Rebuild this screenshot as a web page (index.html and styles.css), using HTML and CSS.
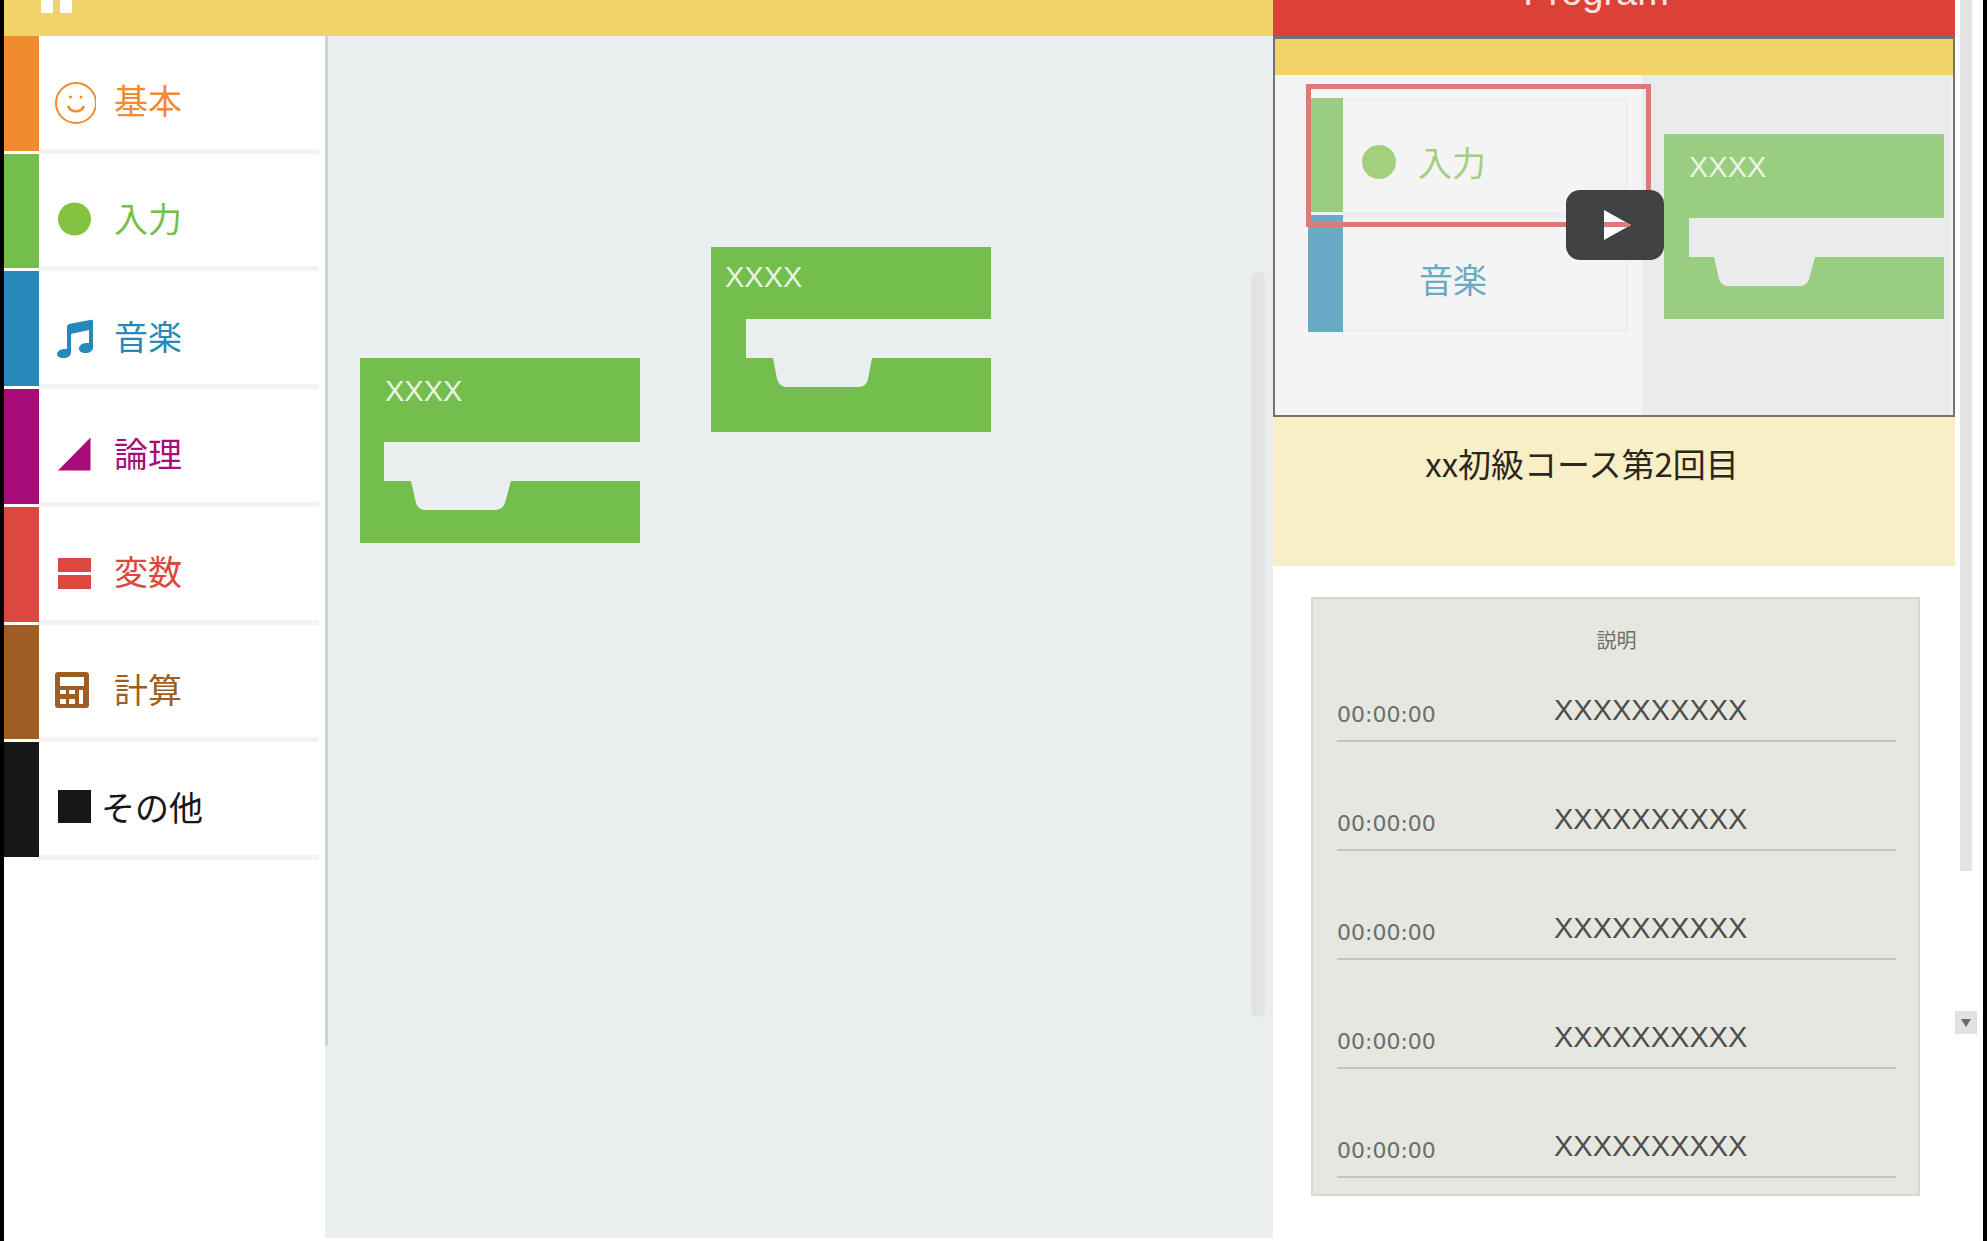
FILE: index.html
```html
<!DOCTYPE html>
<html lang="ja">
<head>
<meta charset="utf-8">
<title>Program</title>
<link rel="stylesheet" href="styles.css">
</head>
<body>
<div class="app">
  <div class="editor">
    <header class="toolbar">
      <button class="pause" type="button" aria-label="一時停止">
        <svg width="31" height="13" viewBox="0 0 31 13" fill="#fff"><path d="M0 0h12v13H0zM19 0h12v13H19z"/></svg>
      </button>
    </header>
    <div class="workspace">
      <nav class="sidebar">
        <ul class="menu">
          <li class="item basic"><span class="strip"></span><button type="button">
            <svg width="42" height="48" viewBox="0 0 42 48" fill="none" stroke="currentColor" stroke-width="2"><circle cx="22" cy="27" r="20"/><path d="M14 30c3 7 13 7 16 0" stroke-width="2.5"/><circle cx="16.500" cy="21" r="1.500" fill="currentColor" stroke="none"/><circle cx="27" cy="21" r="1.500" fill="currentColor" stroke="none"/></svg>基本</button></li>
          <li class="item input"><span class="strip"></span><button type="button">
            <svg width="42" height="48" viewBox="0 0 42 48" fill="#83c341"><circle cx="20.500" cy="25" r="16.500"/></svg>入力</button></li>
          <li class="item music"><span class="strip"></span><button type="button">
            <svg width="42" height="48" viewBox="0 0 42 48" fill="currentColor"><path d="M13 16Q13 14 15 13L36 9Q39 8 39 10V36c0 4-3 6-7.500 6S25 40 25 37.500s3-5.500 7-5.500h3V19l-18 4v18c0 4-3 6-7.500 6S3 45 3 43s3-5 7-5h3z"/></svg>音楽</button></li>
          <li class="item logic"><span class="strip"></span><button type="button">
            <svg width="42" height="48" viewBox="0 0 42 48" fill="currentColor"><path d="M4 41.500L36.500 8.500V41.500z"/></svg>論理</button></li>
          <li class="item variable"><span class="strip"></span><button type="button">
            <svg width="42" height="48" viewBox="0 0 42 48" fill="currentColor"><path d="M4 11h33v14H4zM4 28h33v14H4z"/></svg>変数</button></li>
          <li class="item math"><span class="strip"></span><button type="button">
            <svg width="42" height="48" viewBox="0 0 42 48" fill="currentColor" fill-rule="evenodd"><path d="M4 8h28q3 0 3 3v30q0 3-3 3H4q-3 0-3-3V11q0-3 3-3zM6 13v9h24v-9zM6 26v4h6v-4zM15 26v4h6v-4zM25 26v14h4v-14zM6 35v5h6v-5zM15 35v5h6v-5z"/></svg>計算</button></li>
          <li class="item other"><span class="strip"></span><button type="button">
            <svg width="42" height="48" viewBox="0 0 42 48" fill="currentColor"><path d="M4 8h33v33H4z"/></svg>その他</button></li>
        </ul>
      </nav>
      <main class="canvas">
        <div class="block block-a">
          <svg width="280" height="185" viewBox="0 0 280 185" fill="currentColor"><path d="M0 0H280V84H24V123H51L56 145Q58 151 64 152H136Q143 151 145 145L151 123H280V185H0z"/></svg>
          <span class="block-label">XXXX</span>
        </div>
        <div class="block block-b">
          <svg width="280" height="185" viewBox="0 0 280 185" fill="currentColor"><path d="M0 0H280V72H35V111H62L66 132Q68 139 75 140H148Q156 139 157 132L161 111H280V185H0z"/></svg>
          <span class="block-label">XXXX</span>
        </div>
        <div class="canvas-scroll"></div>
      </main>
    </div>
  </div>
  <aside class="lesson">
    <h1 class="lesson-head">Program</h1>
    <section class="video">
      <div class="video-bar"></div>
      <div class="stage">
        <ul class="stage-menu">
          <li class="stage-item stage-input"><span class="strip"></span><span class="stage-card"><span class="dot"></span>入力</span></li>
          <li class="stage-item stage-music"><span class="strip"></span><span class="stage-card">音楽</span></li>
        </ul>
        <div class="stage-canvas">
          <div class="stage-block">
            <svg width="280" height="185" viewBox="0 0 280 185" fill="#99cd82"><path d="M0 0H280V84H25V123H50L55 145Q57 151 63 152H137Q143 151 145 145L151 123H280V185H0z"/></svg>
            <span class="block-label">XXXX</span>
          </div>
        </div>
      </div>
      <div class="highlight"></div>
      <button class="play" type="button" aria-label="再生">
        <svg width="98" height="70" viewBox="0 0 98 70"><path d="M38 20L65 35L38 50z" fill="#fff"/><path d="M38 32H60L65 35L62 37H38z" fill="#dc7a75"/></svg>
      </button>
    </section>
    <h2 class="course">xx初級コース第2回目</h2>
    <section class="notes">
      <h3 class="notes-title">説明</h3>
      <table class="chapters">
        <tr><td class="time">00:00:00</td><td class="name">XXXXXXXXXX</td></tr>
        <tr><td class="time">00:00:00</td><td class="name">XXXXXXXXXX</td></tr>
        <tr><td class="time">00:00:00</td><td class="name">XXXXXXXXXX</td></tr>
        <tr><td class="time">00:00:00</td><td class="name">XXXXXXXXXX</td></tr>
        <tr><td class="time">00:00:00</td><td class="name">XXXXXXXXXX</td></tr>
      </table>
    </section>
  </aside>
  <div class="rail">
    <div class="rail-thumb"></div>
    <button class="rail-down" type="button" aria-label="下へ">
      <svg width="10" height="8" viewBox="0 0 10 8"><path d="M0 0h10L5 8z" fill="#6b6b6b"/></svg>
    </button>
  </div>
</div>
</body>
</html>
```
FILE: styles.css
```css
* { box-sizing: border-box; }

body {
  margin: 0;
  background: #fff;
  color: #171717;
  font-family: "Liberation Sans", "Noto Sans CJK JP", sans-serif;
}

ul { margin: 0; padding: 0; list-style: none; }
button { margin: 0; padding: 0; border: 0; background: none; font: inherit; color: inherit; }
svg { display: block; flex: none; }

.app {
  display: flex;
  min-height: 100vh;
  border: solid #000;
  border-width: 0 4px;
}

/* Editor */
.editor { flex: 1; display: flex; flex-direction: column; min-width: 0; }
.toolbar { height: 36px; padding-left: 37px; background: #f2d368; }
.pause { display: block; }
.workspace { flex: 1; display: flex; padding-bottom: 3px; }

.sidebar { width: 321px; }
.menu {
  display: grid;
  grid-template-rows: repeat(7, 1fr);
  height: 824px;
  margin-right: 6px;
  font-size: 34px;
  font-family: "Noto Sans CJK JP", sans-serif;
}
.item { display: flex; }
.strip { width: 35px; margin-bottom: 3px; background: currentColor; }
.item button {
  flex: 1;
  display: flex;
  align-items: center;
  gap: 18px;
  padding: 15px 0 0 15px;
  border-bottom: 5px solid #f3f3f3;
}
.basic { color: #f18b2d; }
.input { color: #73be4c; }
.music { color: #2789b8; }
.logic { color: #a80c78; }
.variable { color: #dc483e; }
.math { color: #a05d23; }
.other { color: #171717; }
.other button { gap: 5px; }

/* Block canvas */
.canvas { position: relative; flex: 1; background: #eaeeef; }
.canvas::before {
  content: "";
  display: block;
  width: 3px;
  height: 84%;
  background: #cdd2d3;
}
.block { position: absolute; color: #73be4c; }
.block-a { left: 35px; top: 322px; }
.block-b { left: 386px; top: 211px; }
.block-label {
  position: absolute;
  left: 25px;
  top: 17px;
  font-size: 29px;
  line-height: 32px;
  color: #e9f5e2;
}
.block-b .block-label { left: 14px; top: 14px; }
.canvas-scroll {
  position: absolute;
  right: 8px;
  top: 236px;
  width: 14px;
  height: 745px;
  border-radius: 6px;
  background: #e3e3e2;
}

/* Lesson column */
.lesson { width: 682px; }
.lesson-head {
  display: flex;
  align-items: flex-end;
  justify-content: center;
  height: 36px;
  margin: 0;
  padding: 0 36px 23px 0;
  background: #dc4138;
  color: #f9e3e0;
  font-size: 38px;
  line-height: 42px;
  font-weight: 400;
}
.video {
  position: relative;
  border: 2px solid #737370;
  border-top-width: 3px;
}
.video-bar { height: 36px; background: #f2d368; }
.stage { display: flex; height: 340px; background: #f4f4f4; }
.stage-menu {
  width: 367px;
  padding: 23px 14px 0 33px;
  font-size: 34px;
  font-family: "Noto Sans CJK JP", sans-serif;
}
.stage-item { display: flex; height: 117px; }
.stage-card {
  flex: 1;
  display: flex;
  align-items: center;
  padding: 10px 0 0 76px;
  border: 3px solid #eeeeed;
  border-left: 0;
}
.stage-input { color: #99cd82; }
.stage-input .stage-card { padding-left: 19px; gap: 22px; color: #a3cf80; }
.stage-music { color: #69abc6; }
.stage-music .strip { margin-bottom: 0; }
.dot { width: 34px; height: 34px; border-radius: 50%; background: #a3d07d; }
.stage-canvas {
  flex: 1;
  padding: 59px 0 0 22px;
  background: #eaebeb;
  border-right: 3px solid #f0f0f0;
}
.stage-block { position: relative; }
.highlight {
  position: absolute;
  left: 31px;
  top: 45px;
  width: 345px;
  height: 143px;
  border: 5px solid #dc7a75;
}
.play {
  position: absolute;
  left: calc(50% - 48px);
  top: 151px;
  border-radius: 14px;
  background: #414141;
}
.course {
  height: 149px;
  margin: 0;
  padding: 23px 64px 0 0;
  background: #f9efc7;
  color: #2a271e;
  font-family: "Noto Sans CJK JP", sans-serif;
  font-size: 33px;
  line-height: 46px;
  font-weight: 400;
  text-align: center;
}
.notes {
  margin: 31px 35px 0 38px;
  padding: 29px 22px 16px 24px;
  border: 2px solid #d7d8d5;
  background: #e6e7e1;
}
.notes-title {
  margin: 0;
  color: #6f706c;
  font-family: "Noto Sans CJK JP", sans-serif;
  font-size: 20px;
  line-height: 24px;
  font-weight: 400;
  text-align: center;
}
.chapters { width: 100%; border-collapse: collapse; }
.chapters tr { height: 109px; }
.chapters tr:first-child { height: 89px; }
.chapters td { padding: 0; border-bottom: 2px solid #c3c4bf; vertical-align: bottom; }
.chapters .time {
  width: 217px;
  padding-bottom: 12px;
  color: #6d6e6a;
  font-family: "DejaVu Sans", sans-serif;
  font-size: 22px;
  line-height: 26px;
}
.chapters .name { padding-bottom: 14px; color: #4e4f4c; font-size: 29px; line-height: 32px; }

/* Page scrollbar */
.rail { width: 28px; }
.rail-thumb { width: 12px; height: 871px; margin-left: 5px; background: #e4e4e4; }
.rail-down {
  display: flex;
  align-items: center;
  justify-content: center;
  width: 22px;
  height: 23px;
  margin-top: 140px;
  background: #e2e2e2;
}
```
